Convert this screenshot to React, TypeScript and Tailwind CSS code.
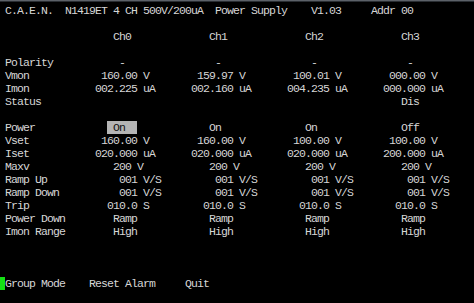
import React from "react";

const place = (items: [number, string][], start = ""): string => {
  let s = start;
  for (const [c, t] of items) {
    s = s.padEnd(c, " ") + t;
  }
  return s;
};

const four = (cols: number[], vals: string[]): [number, string][] =>
  cols.map((c, i) => [c, vals[i]] as [number, string]);

const rows: string[] = [
  " C.A.E.N.  N1419ET 4 CH 500V/200uA  Power Supply    V1.03     Addr 00",
  "",
  place(four([19, 35, 51, 67], ["Ch0", "Ch1", "Ch2", "Ch3"])),
  "",
  place([[1, "Polarity"], ...four([20, 36, 52, 68], ["-", "-", "-", "-"])]),
  place([[1, "Vmon"], ...four([17, 33, 49, 65], ["160.00 V", "159.97 V", "100.01 V", "000.00 V"])]),
  place([[1, "Imon"], ...four([16, 32, 48, 64], ["002.225 uA", "002.160 uA", "004.235 uA", "000.000 uA"])]),
  place([[1, "Status"], [67, "Dis"]]),
  "",
  "__POWER__",
  place([[1, "Vset"], ...four([17, 33, 49, 65], ["160.00 V", "160.00 V", "100.00 V", "100.00 V"])]),
  place([[1, "Iset"], ...four([16, 32, 48, 64], ["020.000 uA", "020.000 uA", "020.000 uA", "200.000 uA"])]),
  place([[1, "Maxv"], ...four([19, 35, 51, 67], ["200 V", "200 V", "200 V", "200 V"])]),
  place([[1, "Ramp Up"], ...four([20, 36, 52, 68], ["001 V/S", "001 V/S", "001 V/S", "001 V/S"])]),
  place([[1, "Ramp Down"], ...four([20, 36, 52, 68], ["001 V/S", "001 V/S", "001 V/S", "001 V/S"])]),
  place([[1, "Trip"], ...four([18, 34, 50, 66], ["010.0 S", "010.0 S", "010.0 S", "010.0 S"])]),
  place([[1, "Power Down"], ...four([19, 35, 51, 67], ["Ramp", "Ramp", "Ramp", "Ramp"])]),
  place([[1, "Imon Range"], ...four([19, 35, 51, 67], ["High", "High", "High", "High"])]),
  "",
  "",
  "",
  "__MENU__",
];

export default function App() {
  const powerLeft = place([[1, "Power"]]).padEnd(18, " ");
  const powerRight = place([[35, "On"], [51, "On"], [67, "Off"]], " ".repeat(23));
  const menu = place([[1, "Group Mode"], [15, "Reset Alarm"], [31, "Quit"]], " ").slice(1);

  return (
    <div className="w-[474px] h-[303px] bg-black overflow-hidden flex flex-col">
      <div className="h-px bg-[#5c6168]" />
      <div className="h-px bg-[#2a2e33]" />
      <div
        className="pt-[2px] -ml-px text-[#d6d6d6] text-[11.5px] tracking-[-0.9px] leading-[13px]"
        style={{ fontFamily: '"Liberation Mono", "DejaVu Sans Mono", monospace' }}
      >
        {rows.map((r, i) => {
          if (r === "__POWER__") {
            return (
              <div key={i} className="h-[13px] whitespace-pre">
                <span>{powerLeft}</span>
                <span className="bg-[#b4b4b4] text-[#111111]">{" On  "}</span>
                <span>{powerRight.slice(23)}</span>
              </div>
            );
          }
          if (r === "__MENU__") {
            return (
              <div key={i} className="h-[13px] whitespace-pre">
                <span className="bg-[#14e014]">{" "}</span>
                <span>{menu}</span>
              </div>
            );
          }
          return (
            <div key={i} className="h-[13px] whitespace-pre">
              {r}
            </div>
          );
        })}
      </div>
    </div>
  );
}
